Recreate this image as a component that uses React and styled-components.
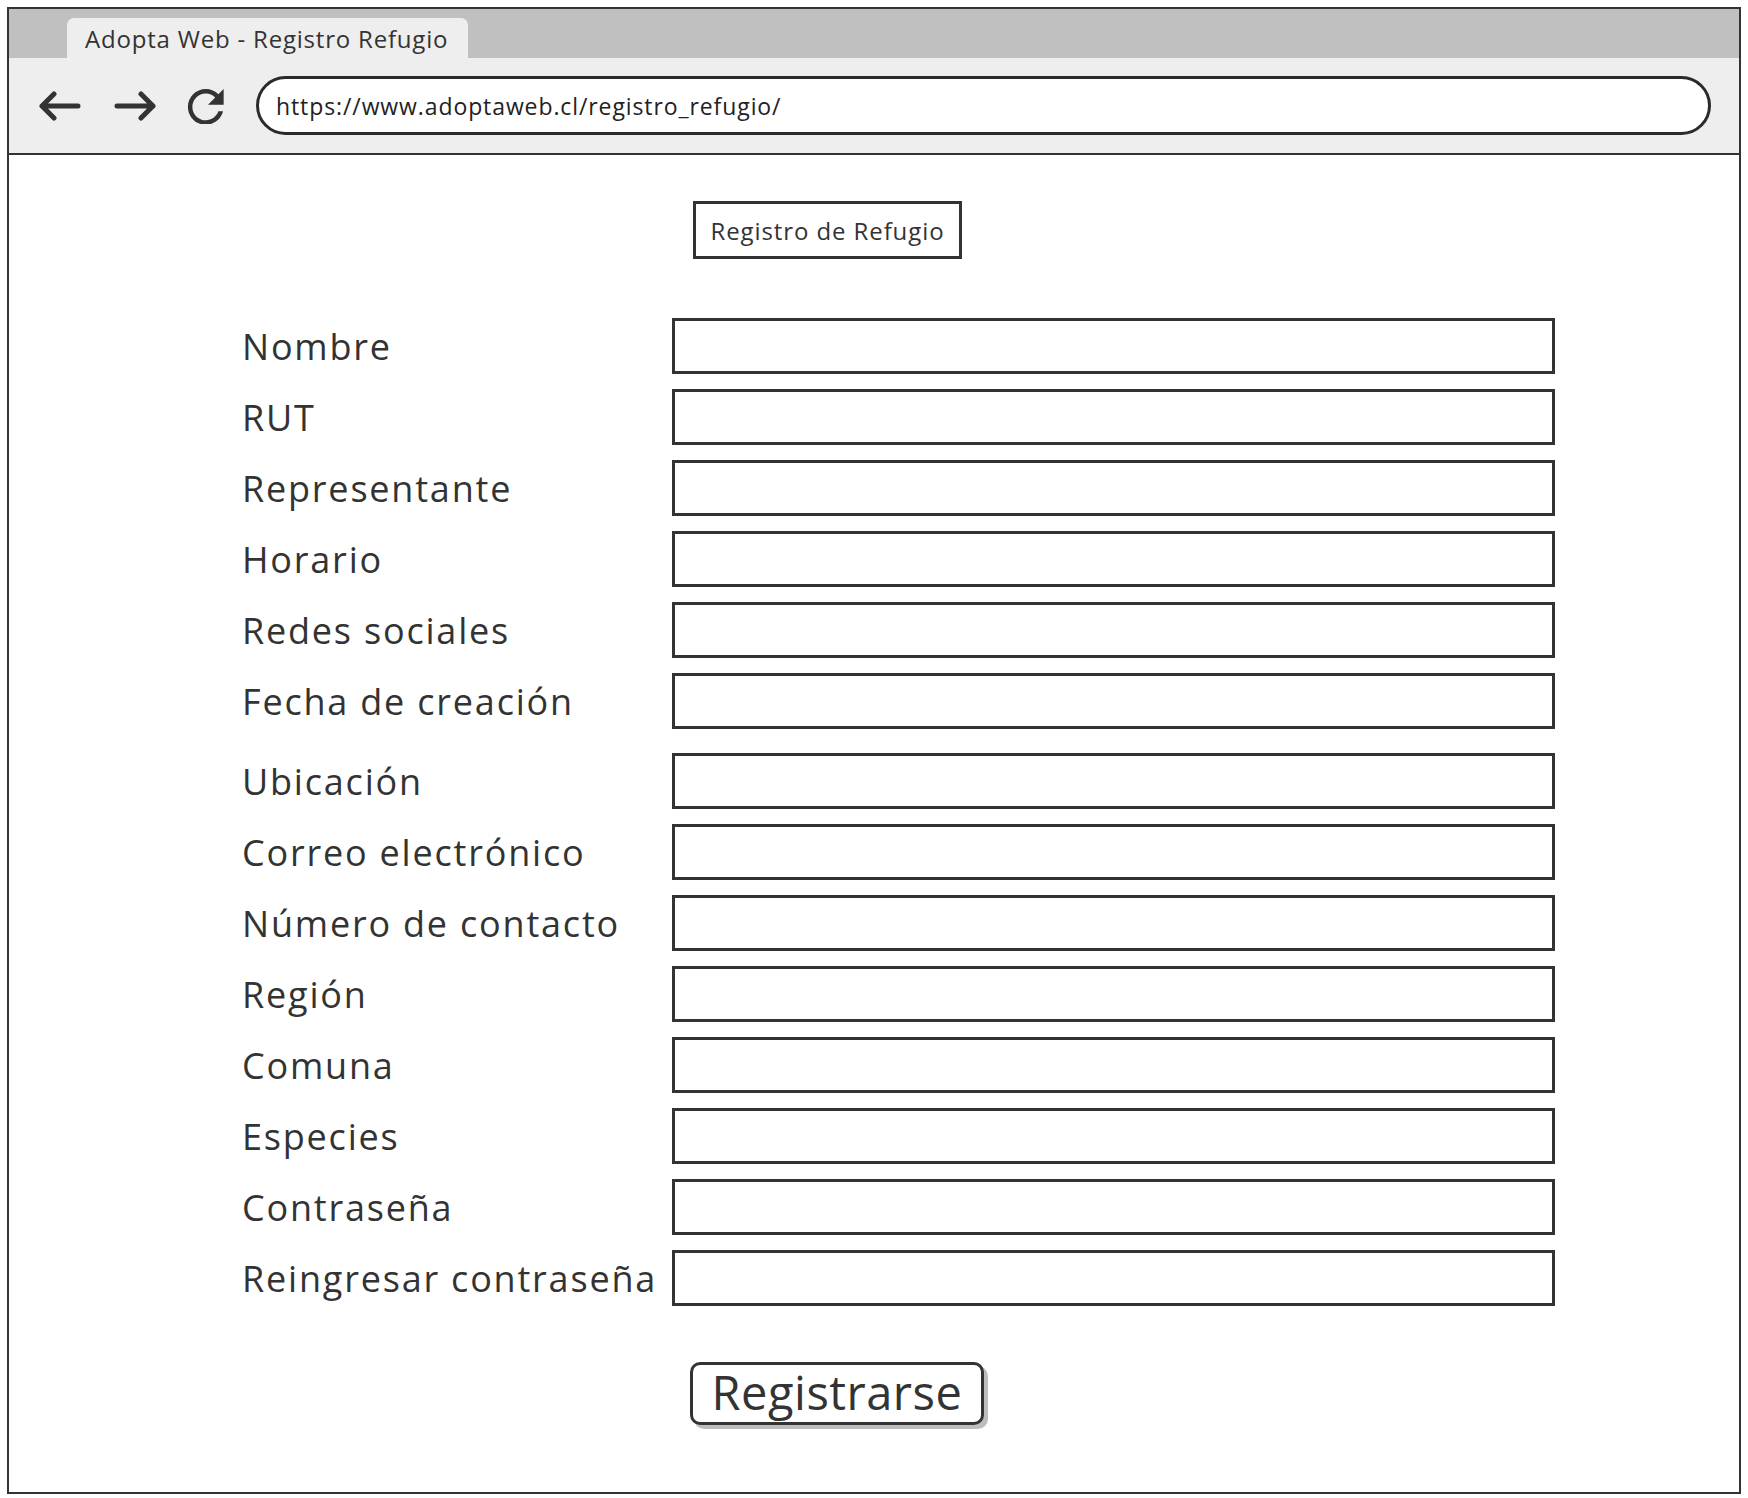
import React from "react";
import styled, { createGlobalStyle } from "styled-components";

const GlobalStyle = createGlobalStyle`
  html, body { margin: 0; padding: 0; background: #ffffff; }
  body { font-family: "Open Sans", "Noto Sans", sans-serif; color: #333333; }
  * { box-sizing: border-box; }
`;

const Page = styled.div`
  padding: 7px 7px 4px 7px;
  height: 1498px;
`;

const Frame = styled.div`
  height: 1487px;
  border: 2.5px solid #333333;
  display: flex;
  flex-direction: column;
  background: #ffffff;
`;

const TabBar = styled.div`
  height: 49px;
  background: #c0c0c0;
  display: flex;
  align-items: flex-end;
  padding-left: 58px;
`;

const Tab = styled.div`
  width: 401px;
  height: 40px;
  background: #eeeeee;
  border-radius: 7px 7px 0 0;
  display: flex;
  align-items: center;
  padding-left: 18px;
  font-size: 24px;
  color: #333333;
  letter-spacing: 0.8px;
`;

const Toolbar = styled.div`
  height: 97px;
  background: #eeeeee;
  border-bottom: 2.5px solid #333333;
  display: flex;
  align-items: center;
  padding: 0 28px 0 30px;
`;

const NavIcon = styled.svg`
  flex: none;
  margin-right: ${(p) => p.$gap}px;
  color: #333333;
`;

const UrlBar = styled.div`
  flex: 1;
  height: 59px;
  border: 3px solid #2b2b2b;
  border-radius: 30px;
  background: #ffffff;
  display: flex;
  align-items: center;
  padding-left: 17px;
  font-size: 23px;
  color: #222222;
  letter-spacing: 0.9px;
`;

const Content = styled.div`
  flex: 1;
  display: flex;
  flex-direction: column;
  align-items: flex-start;
  padding-left: 233px;
`;

const TitleBox = styled.div`
  margin-top: 46px;
  margin-left: 451px;
  width: 269px;
  height: 58px;
  border: 3px solid #333333;
  display: flex;
  align-items: center;
  justify-content: center;
  font-size: 24px;
  letter-spacing: 0.9px;
  color: #333333;
`;

const Form = styled.div`
  margin-top: 59px;
  display: flex;
  flex-direction: column;
  gap: 15px;
`;

const Row = styled.div`
  display: grid;
  grid-template-columns: 430px 883px;
  align-items: center;
  height: 56px;
  margin-top: ${(p) => (p.$extra ? 9 : 0)}px;
`;

const Label = styled.div`
  font-size: 36px;
  color: #333333;
  white-space: nowrap;
  letter-spacing: 1.8px;
`;

const Field = styled.div`
  height: 56px;
  border: 3px solid #333333;
  background: #ffffff;
`;

const SubmitButton = styled.button`
  margin-top: 56px;
  margin-left: 448px;
  width: 294px;
  height: 63px;
  border: 3px solid #333333;
  border-radius: 10px;
  background: #ffffff;
  box-shadow: 4px 4px 0 #bdbdbd;
  font-family: inherit;
  font-size: 47px;
  letter-spacing: 0.5px;
  color: #333333;
  display: flex;
  align-items: center;
  justify-content: center;
  padding: 0 0 4px 0;
`;

const fields = [
  "Nombre",
  "RUT",
  "Representante",
  "Horario",
  "Redes sociales",
  "Fecha de creación",
  "Ubicación",
  "Correo electrónico",
  "Número de contacto",
  "Región",
  "Comuna",
  "Especies",
  "Contraseña",
  "Reingresar contraseña",
];

function BackArrow() {
  return (
    <NavIcon $gap={33} width="42" height="34" viewBox="0 0 42 34">
      <path
        d="M3 17 H39 M3 17 L15 5 M3 17 L15 29"
        fill="none"
        stroke="currentColor"
        strokeWidth="5"
        strokeLinecap="round"
        strokeLinejoin="round"
      />
    </NavIcon>
  );
}

function ForwardArrow() {
  return (
    <NavIcon $gap={31} width="42" height="34" viewBox="0 0 42 34">
      <path
        d="M3 17 H39 M39 17 L27 5 M39 17 L27 29"
        fill="none"
        stroke="currentColor"
        strokeWidth="5"
        strokeLinecap="round"
        strokeLinejoin="round"
      />
    </NavIcon>
  );
}

function Reload() {
  return (
    <NavIcon $gap={31} width="38" height="36" viewBox="3.6 3.6 17 16">
      <path
        fill="currentColor"
        d="M17.65 6.35C16.2 4.9 14.21 4 12 4c-4.42 0-7.99 3.58-7.99 8s3.57 8 7.99 8c3.73 0 6.84-2.55 7.73-6h-2.08c-.82 2.33-3.04 4-5.65 4-3.31 0-6-2.69-6-6s2.69-6 6-6c1.66 0 3.14.69 4.22 1.78L13 11h7V4l-2.35 2.35z"
      />
    </NavIcon>
  );
}

export default function App() {
  return (
    <>
      <GlobalStyle />
      <Page>
        <Frame>
          <TabBar>
            <Tab>Adopta Web - Registro Refugio</Tab>
          </TabBar>
          <Toolbar>
            <BackArrow />
            <ForwardArrow />
            <Reload />
            <UrlBar>https://www.adoptaweb.cl/registro_refugio/</UrlBar>
          </Toolbar>
          <Content>
            <TitleBox>Registro de Refugio</TitleBox>
            <Form>
              {fields.map((f) => (
                <Row key={f} $extra={f === "Ubicación"}>
                  <Label>{f}</Label>
                  <Field />
                </Row>
              ))}
            </Form>
            <SubmitButton type="button">Registrarse</SubmitButton>
          </Content>
        </Frame>
      </Page>
    </>
  );
}
